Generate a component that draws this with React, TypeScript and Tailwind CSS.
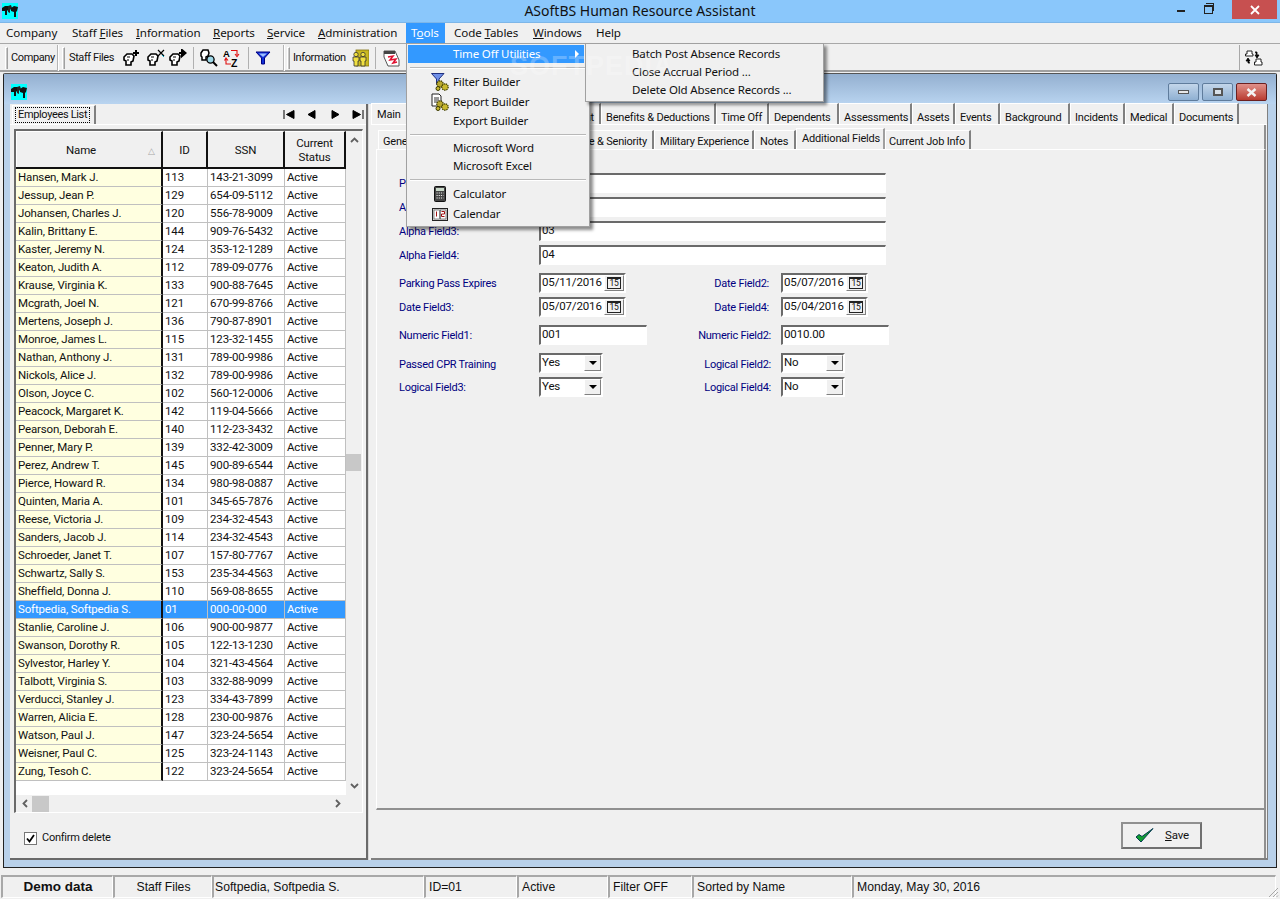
import React from "react";

const rows: [string, string, string][] = [
  ["Hansen, Mark J.", "113", "143-21-3099"],
  ["Jessup, Jean P.", "129", "654-09-5112"],
  ["Johansen, Charles J.", "120", "556-78-9009"],
  ["Kalin, Brittany E.", "144", "909-76-5432"],
  ["Kaster, Jeremy N.", "124", "353-12-1289"],
  ["Keaton, Judith A.", "112", "789-09-0776"],
  ["Krause, Virginia K.", "133", "900-88-7645"],
  ["Mcgrath, Joel N.", "121", "670-99-8766"],
  ["Mertens, Joseph J.", "136", "790-87-8901"],
  ["Monroe, James L.", "115", "123-32-1455"],
  ["Nathan, Anthony J.", "131", "789-00-9986"],
  ["Nickols, Alice J.", "132", "789-00-9986"],
  ["Olson, Joyce C.", "102", "560-12-0006"],
  ["Peacock, Margaret K.", "142", "119-04-5666"],
  ["Pearson, Deborah E.", "140", "112-23-3432"],
  ["Penner, Mary P.", "139", "332-42-3009"],
  ["Perez, Andrew T.", "145", "900-89-6544"],
  ["Pierce, Howard R.", "134", "980-98-0887"],
  ["Quinten, Maria A.", "101", "345-65-7876"],
  ["Reese, Victoria J.", "109", "234-32-4543"],
  ["Sanders, Jacob J.", "114", "234-32-4543"],
  ["Schroeder, Janet T.", "107", "157-80-7767"],
  ["Schwartz, Sally S.", "153", "235-34-4563"],
  ["Sheffield, Donna J.", "110", "569-08-8655"],
  ["Softpedia, Softpedia S.", "01", "000-00-000"],
  ["Stanlie, Caroline J.", "106", "900-00-9877"],
  ["Swanson, Dorothy R.", "105", "122-13-1230"],
  ["Sylvestor, Harley Y.", "104", "321-43-4564"],
  ["Talbott, Virginia S.", "103", "332-88-9099"],
  ["Verducci, Stanley J.", "123", "334-43-7899"],
  ["Warren, Alicia E.", "128", "230-00-9876"],
  ["Watson, Paul J.", "147", "323-24-5654"],
  ["Weisner, Paul C.", "125", "323-24-1143"],
  ["Zung, Tesoh C.", "122", "323-24-5654"],
];

const Logo = () => (
  <svg width="16" height="16" viewBox="0 0 16 16" className="block">
    <rect width="16" height="16" fill="#00ffff" />
    <path d="M0 5 L3 3 L7 3 L7 6 L5 8 L5 12 L3 12 L3 8 L0 8Z" fill="#111" />
    <path d="M6 3 L9 2 L10 5 L8 7 L8 10 L6 9Z" fill="#222" />
    <path d="M9 5 L12 3 L16 4 L15 8 L14 9 L14 14 L12 14 L12 9 L9 8Z" fill="#111" />
  </svg>
);

const Head = ({ mark }: { mark: "plus" | "x" | "arrow" }) => (
  <svg width="18" height="18" viewBox="0 0 18 18" className="block shrink-0">
    <path d="M1 8 L4 5 L9 5 L11 7 L10 12 L8 13 L8 16 L3 16 L3 12 L1 11Z" fill="#fff" stroke="#000" strokeWidth="1.6" />
    <path d="M4 8 L7 8 M4 11 L6 11" stroke="#000" strokeWidth="1.2" />
    {mark === "plus" && <path d="M13 1 V7 M10 4 H16" stroke="#000" strokeWidth="2" />}
    {mark === "x" && <path d="M11 1 L17 7 M17 1 L11 7" stroke="#000" strokeWidth="1.2" />}
    {mark === "x" && <path d="M15 6 L17 8" stroke="#00a0c0" strokeWidth="1" />}
    {mark === "arrow" && <path d="M10 4 H14 M13 1 L16.5 4 L13 7Z" stroke="#000" strokeWidth="2" fill="#000" />}
  </svg>
);

const SearchIcon = () => (
  <svg width="18" height="18" viewBox="0 0 18 18" className="block shrink-0">
    <path d="M1 4 L3 1 L8 1 L9 4 L8 7 L6 8 L6 11 L2 11 L2 8 L1 7Z" fill="#fff" stroke="#000" strokeWidth="1.5" />
    <circle cx="10.5" cy="10.5" r="3.6" fill="#9fd8e8" stroke="#000" strokeWidth="1.3" />
    <path d="M13 13 L17 17" stroke="#000" strokeWidth="2" />
  </svg>
);

const SortIcon = () => (
  <svg width="18" height="18" viewBox="0 0 18 18" className="block shrink-0">
    <text x="0" y="8" fontFamily="Liberation Sans, sans-serif" fontWeight="700" fontSize="9.5" fill="#000">A</text>
    <text x="8" y="18" fontFamily="Liberation Sans, sans-serif" fontWeight="700" fontSize="10.5" fill="#000">Z</text>
    <path d="M8 1.5 H14 V6 M12 5 L14 7.5 L16 5" fill="none" stroke="#e01010" strokeWidth="1.1" />
    <path d="M8 15 H3 V10 M1.5 11.5 L3 9 L5 11.5" fill="none" stroke="#e01010" strokeWidth="1.1" />
  </svg>
);

const FunnelIcon = () => (
  <svg width="16" height="14" viewBox="0 0 16 14" className="block shrink-0">
    <path d="M1 1 H15 L9.5 7 V13 H6.5 V7Z" fill="#1030d8" stroke="#000080" strokeWidth="1" />
    <path d="M4 2.5 H12 L8 6Z" fill="#9fc0ff" />
  </svg>
);

const PeopleIcon = () => (
  <svg width="18" height="18" viewBox="0 0 18 18" className="block shrink-0">
    <rect x="5" y="1" width="13" height="16" fill="#c8b820" stroke="#807010" strokeWidth="0.8" />
    <circle cx="5" cy="5.5" r="2.2" fill="#f0e040" stroke="#333" strokeWidth="0.8" />
    <path d="M2 8 H8 V12 H7 V17 H3 V12 H2Z" fill="#f0e040" stroke="#333" strokeWidth="0.8" />
    <circle cx="12" cy="5.5" r="2.2" fill="#f0e040" stroke="#333" strokeWidth="0.8" />
    <path d="M9 8 H15 V12 H14 V17 H10 V12 H9Z" fill="#f0e040" stroke="#333" strokeWidth="0.8" />
  </svg>
);

const PlannerIcon = () => (
  <svg width="17" height="17" viewBox="0 0 17 17" className="block shrink-0">
    <path d="M1 1 H12 L16 10 V16 H5 L1 7Z" fill="#fff" stroke="#555" strokeWidth="1" />
    <path d="M1 1 H12 V4 H1Z" fill="#444" />
    <path d="M5 7 L10 6 L7 10 L13 9 L10 13 L14 12" fill="none" stroke="#e01030" strokeWidth="1.5" />
  </svg>
);

const TransferIcon = () => (
  <svg width="18" height="18" viewBox="0 0 18 18" className="block">
    <path d="M2 2 H7 V5 H8 V7 H0.5 V5 H2Z" fill="#fff" stroke="#222" strokeWidth="1" />
    <path d="M11 10 H16 V13 H17 V16 H9.5 V13 H11Z" fill="#fff" stroke="#222" strokeWidth="1" />
    <path d="M10 3 H12 V7 M10 6 L12 9 L14 6Z" fill="#000" stroke="#000" strokeWidth="0.8" />
    <path d="M5 14 H3 V11 M1 12 L3 9 L5 12Z" fill="#000" stroke="#000" strokeWidth="0.8" />
  </svg>
);

const BuilderIcon = ({ kind }: { kind: "filter" | "report" }) => (
  <svg width="18" height="18" viewBox="0 0 18 18" className="block">
    {kind === "filter" ? (
      <path d="M0.5 0.5 H13 L8 6 V11 H5.5 V6Z" fill="#6f8fe8" stroke="#203080" strokeWidth="1" />
    ) : (
      <path d="M1 1 H8 L10 3 V13 H1Z" fill="#fff" stroke="#222" strokeWidth="1" />
    )}
    {kind === "report" && <path d="M3 5 H8 M3 7 H8 M3 9 H6" stroke="#333" strokeWidth="1" />}
    <circle cx="9" cy="11" r="3.2" fill="#b8a830" stroke="#3a3a00" strokeWidth="1.2" strokeDasharray="1.4 0.8" />
    <circle cx="14" cy="14" r="3.2" fill="#c8b830" stroke="#3a3a00" strokeWidth="1.2" strokeDasharray="1.4 0.8" />
    <circle cx="7" cy="15.5" r="2" fill="#c8b830" stroke="#3a3a00" strokeWidth="1" />
  </svg>
);

const CalcIcon = () => (
  <svg width="12" height="16" viewBox="0 0 12 16" className="block">
    <rect x="0.5" y="0.5" width="11" height="15" rx="1" fill="#444" stroke="#111" />
    <rect x="2" y="2" width="8" height="3" fill="#c8d8c8" />
    <path d="M2.5 7 H9.5 M2.5 9.5 H9.5 M2.5 12 H9.5" stroke="#e8e8e8" strokeWidth="1.2" strokeDasharray="1.2 1" />
  </svg>
);

const BookIcon = () => (
  <svg width="16" height="13" viewBox="0 0 16 13" className="block">
    <rect x="0.5" y="0.5" width="15" height="12" fill="#ddd" stroke="#222" />
    <rect x="2" y="2" width="5.5" height="9" fill="#fff" stroke="#444" strokeWidth="0.6" />
    <rect x="8.5" y="2" width="5.5" height="9" fill="#fff" stroke="#444" strokeWidth="0.6" />
    <path d="M4.5 3.5 V8.5 M9.5 3.5 H12.5 V6 H9.5 V8.5 H12.5" fill="none" stroke="#a01010" strokeWidth="1" />
  </svg>
);

const Grip = () => <div className="w-[3px] h-[22px] border-l border-t border-white bg-[#c8c8c8] shrink-0 border-r border-r-[#a0a0a0]" />;
const Divider = () => <div className="w-[2px] h-[26px] bg-[#b4b4b4] border-r border-white shrink-0" />;
const Sep = () => <div className="w-px h-[22px] bg-[#b0b0b0] shrink-0" />;

const menus: [React.ReactNode, string][] = [
  [<span>Company</span>, "w-[66px] pl-[6px]"],
  [<span>Staff <u>F</u>iles</span>, "w-[64px] pl-[6px]"],
  [<span><u>I</u>nformation</span>, "w-[77px] pl-[6px]"],
  [<span><u>R</u>eports</span>, "w-[54px] pl-[6px]"],
  [<span><u>S</u>ervice</span>, "w-[51px] pl-[6px]"],
  [<span><u>A</u>dministration</span>, "w-[94px] pl-[6px]"],
  [<span>T<u>o</u>ols</span>, "w-[39px] pl-[5px] bg-[#3399ff] text-white"],
  [<span>Code <u>T</u>ables</span>, "w-[82px] pl-[9px]"],
  [<span><u>W</u>indows</span>, "w-[63px] pl-[6px]"],
  [<span>Help</span>, "w-[50px] pl-[6px]"],
];

const Tab = ({ children, c, active, tall, right, main }: { children?: React.ReactNode; c: string; active?: boolean; tall?: boolean; right?: boolean; main?: boolean }) => (
  <div
    className={`${c} shrink-0 flex items-center whitespace-nowrap overflow-hidden border-t border-l border-white border-r-2 border-r-[#808080] bg-[#f0f0f0] ${
      right ? "justify-end pr-[5px]" : ""
    } ${
      active
        ? "h-[21px] -mt-[2px] border-r-[#a0a0a0]"
        : main
          ? "h-[21px] pt-[3px]"
          : tall
            ? "h-[21px] pt-[7px] leading-[13px]"
            : "h-[19px] pt-[3px] leading-[15px]"
    }`}
  >
    <span>{children}</span>
  </div>
);

const sunken = "border-t-2 border-l-2 border-t-[#6a6a6a] border-l-[#6a6a6a] border-r border-b border-r-white border-b-white";

const Input = ({ v, w }: { v: string; w: string }) => (
  <div className={`${w} h-[20px] bg-white ${sunken} pl-[1px] leading-[15px] shrink-0 whitespace-nowrap`}>{v}</div>
);

const DateBox = ({ v }: { v: string }) => (
  <div className={`w-[87px] h-[20px] bg-white ${sunken} border-r-2 border-b-2 border-r-[#6a6a6a] border-b-[#6a6a6a] flex shrink-0`}>
    <div className="flex-1 pl-[1px] leading-[15px]">{v}</div>
    <div className="w-[20px] h-full bg-[#f0f0f0] border-t border-l border-white border-r border-b border-r-[#808080] border-b-[#808080] flex items-center justify-center">
      <span className="border-t-2 border-b border-x border-[#222] text-[8.5px] leading-[8px] h-[12px] px-[1px] tracking-[-0.2px]">15</span>
    </div>
  </div>
);

const Select = ({ v }: { v: string }) => (
  <div className={`w-[64px] h-[20px] bg-white ${sunken} border-r-2 border-b-2 border-r-[#6a6a6a] border-b-[#6a6a6a] flex shrink-0`}>
    <div className="flex-1 pl-[1px] leading-[15px]">{v}</div>
    <div className="w-[17px] h-full bg-[#f0f0f0] border-t border-l border-white border-r border-b border-r-[#808080] border-b-[#808080] flex items-center justify-center">
      <span className="w-0 h-0 border-x-[4px] border-x-transparent border-t-[4px] border-t-black" />
    </div>
  </div>
);

const lab = "text-[#000080] text-[11px] tracking-[-0.25px] leading-[20px] whitespace-nowrap shrink-0";
const Label = ({ t, lower }: { t: string; lower?: boolean }) => <div className={`w-[140px] ${lab} ${lower ? "pt-[2px]" : "pt-[1px]"}`}>{t}</div>;

const Nav = ({ kind }: { kind: "first" | "prev" | "next" | "last" }) => (
  <svg width="12" height="9" viewBox="0 0 12 9" className="block">
    {kind === "first" && <path d="M1 0 V9 M2 0 H2 M11 0.5 L3.5 4.5 L11 8.5Z" stroke="#000" fill="#000" />}
    {kind === "prev" && <path d="M9 0.5 L2 4.5 L9 8.5Z" fill="#000" stroke="#000" />}
    {kind === "next" && <path d="M3 0.5 L10 4.5 L3 8.5Z" fill="#000" stroke="#000" />}
    {kind === "last" && <path d="M11 0 V9 M1 0.5 L8.5 4.5 L1 8.5Z" stroke="#000" fill="#000" />}
  </svg>
);

const Chevron = ({ d }: { d: string }) => (
  <svg width="9" height="9" viewBox="0 0 9 9" className="block">
    <path d={d} fill="none" stroke="#606060" strokeWidth="1.8" />
  </svg>
);

const MenuRow = ({ h, icon, t }: { h: string; icon?: React.ReactNode; t: string }) => (
  <div className={`${h} flex items-center`}>
    <div className="w-[45px] flex justify-center pr-[2px] pl-[21px]">{icon}</div>
    <div>{t}</div>
  </div>
);

const MenuSep = () => (
  <div className="h-[9px] flex items-center mx-[2px]">
    <div className="w-full h-[2px] bg-[#b8b8b8] border-b border-white" />
  </div>
);

const StatusCell = ({ w, children, center, bold, pl }: { w: string; children: React.ReactNode; center?: boolean; bold?: boolean; pl?: boolean }) => (
  <div
    className={`${w} shrink-0 h-[23px] border-t-2 border-l-2 border-t-[#a8a8a8] border-l-[#a8a8a8] border-b border-r border-white flex items-center whitespace-nowrap pt-[1px] ${pl ? "pl-[3px]" : "pl-[1px]"} ${
      center ? "justify-center" : ""
    } ${bold ? "font-bold text-[13.5px]" : ""}`}
  >
    {children}
  </div>
);

export default function App() {
  const ui = "font-['Roboto',sans-serif] text-[11.5px] tracking-[-0.15px] text-[#111]";
  const seg = "font-['Noto_Sans',sans-serif] text-[#111]";
  const tb = "text-[11px] tracking-[-0.4px]";
  const tabs = "text-[11px] tracking-[-0.2px]";
  return (
    <div className="relative w-[1280px] h-[899px] overflow-hidden bg-[#f0f0f0] flex flex-col">
      {/* Title bar */}
      <div className="h-[23px] shrink-0 bg-[#8ac7fb] relative flex items-center justify-center font-['Noto_Sans',sans-serif] text-[14px] text-[#111] border-b border-[#7db6e8]">
        <div className="absolute left-[2px] top-[3px]"><Logo /></div>
        <span className="-mt-[1px]">ASoftBS Human Resource Assistant</span>
        <div className="absolute right-[3px] top-0 flex h-[19px] items-center">
          <div className="w-[8px] h-[2px] bg-[#222] mr-[19px] mt-[3px]" />
          <div className="relative w-[9px] h-[9px] border border-[#222] border-t-2 mr-[19px] bg-[#8ac7fb]">
            <div className="absolute -top-[4px] left-[1px] w-[8px] h-[8px] border border-[#222] border-b-0 border-l-0" />
          </div>
          <div className="w-[45px] h-[19px] bg-[#c75050] text-white flex items-center justify-center">
            <svg width="10" height="10" viewBox="0 0 10 10"><path d="M1 1 L9 9 M9 1 L1 9" stroke="#fff" strokeWidth="1.8" /></svg>
          </div>
        </div>
      </div>

      {/* Menu bar */}
      <div className={`h-[21px] shrink-0 flex items-stretch border-b border-[#a8a8a8] text-[11.6px] ${seg}`}>
        {menus.map(([t, c], i) => (
          <div key={i} className={`${c} flex items-center whitespace-nowrap tracking-[-0.1px]`}>{t}</div>
        ))}
      </div>

      {/* Toolbar */}
      <div className={`h-[28px] shrink-0 flex items-center border-b-2 border-[#a0a0a0] pl-[5px] pt-[2px] ${ui}`}>
        <Grip />
        <div className={`w-[49px] pl-[3px] shrink-0 ${tb}`}>Company</div>
        <Divider />
        <div className="w-[3px]" />
        <Grip />
        <div className={`w-[58px] pl-[4px] shrink-0 whitespace-nowrap ${tb}`}>Staff Files</div>
        <Head mark="plus" />
        <div className="w-[6px]" />
        <Head mark="x" />
        <div className="w-[4px]" />
        <Head mark="arrow" />
        <div className="w-[6px]" />
        <Sep />
        <div className="w-[6px]" />
        <SearchIcon />
        <div className="w-[5px]" />
        <SortIcon />
        <div className="w-[7px]" />
        <Sep />
        <div className="w-[6px]" />
        <FunnelIcon />
        <div className="w-[12px]" />
        <Divider />
        <div className="w-[2px]" />
        <Grip />
        <div className={`w-[61px] pl-[3px] shrink-0 whitespace-nowrap ${tb}`}>Information</div>
        <PeopleIcon />
        <div className="w-[6px]" />
        <Sep />
        <div className="w-[7px]" />
        <PlannerIcon />
        <div className="flex-1" />
        <div className="w-px h-[26px] bg-[#a8a8a8] mr-[5px]" />
        <div className="mr-[17px]"><TransferIcon /></div>
      </div>

      {/* MDI area */}
      <div className={`flex-1 min-h-0 pl-[3px] pt-[1px] ${ui}`}>
        <div className="w-[1274px] h-[795px] border border-[#222] border-t-[#555] rounded-t-[2px] bg-[#b9d1ea] flex flex-col">
          {/* child title */}
          <div className="h-[30px] shrink-0 bg-gradient-to-b from-[#94b0d0] to-[#b9d4f0] flex items-end pb-[4px] pl-[7px] pr-[9px]">
            <Logo />
            <div className="flex-1" />
            <div className="flex gap-[3px] mb-[-1px]">
              <div className="w-[31px] h-[18px] rounded-[2px] border border-[#5f7c9c] bg-gradient-to-b from-[#c3d6ea] to-[#8fb0d2] flex items-center justify-center">
                <div className="w-[11px] h-[4px] bg-[#e8e8e8] border border-[#555]" />
              </div>
              <div className="w-[31px] h-[18px] rounded-[2px] border border-[#5f7c9c] bg-gradient-to-b from-[#c3d6ea] to-[#8fb0d2] flex items-center justify-center">
                <div className="w-[10px] h-[8px] bg-[#d8e0e8] border-2 border-[#555]" />
              </div>
              <div className="w-[31px] h-[18px] rounded-[2px] border border-[#6b2020] bg-gradient-to-b from-[#e0908a] to-[#b83a30] flex items-center justify-center">
                <svg width="11" height="9" viewBox="0 0 11 9"><path d="M1.5 1 L9.5 8 M9.5 1 L1.5 8" stroke="#f4f4f4" strokeWidth="2.4" /></svg>
              </div>
            </div>
          </div>

          {/* child body */}
          <div className="flex-1 min-h-0 flex pl-[6px] pb-[7px] pr-[8px]">
            {/* Left panel */}
            <div className="w-[358px] h-full bg-[#f0f0f0] border-r-2 border-b-2 border-r-[#6a6a6a] border-b-[#6a6a6a] flex flex-col shrink-0">
              <div className="h-[20px] flex items-end shrink-0 pl-[2px] relative">
                <div className="w-[84px] h-[19px] flex items-center border-t border-l border-white border-r-2 border-r-[#808080] pl-[2px]">
                  <span className="border border-dotted border-black px-[2px] leading-[14px] whitespace-nowrap text-[11px] tracking-[-0.35px]">Employees List</span>
                </div>
                <div className="flex-1" />
                <div className="flex items-center gap-[11px] pr-[2px] h-full">
                  <Nav kind="first" />
                  <Nav kind="prev" />
                  <Nav kind="next" />
                  <Nav kind="last" />
                </div>
              </div>
              {/* Tab sheet */}
              <div className="border-t border-white flex-1 min-h-0 pt-[4px] pl-[4px]">
                <div className="w-[349px] h-[684px] border-t-2 border-l-2 border-t-[#6a6a6a] border-l-[#6a6a6a] border-b border-r border-b-white border-r-white flex flex-col">
                  <div className="flex flex-1 min-h-0">
                    <div className="w-[330px] flex flex-col bg-white shrink-0">
                      {/* header */}
                      <div className="h-[38px] flex shrink-0 border-b-2 border-[#111] bg-[#f0f0f0] text-center leading-[14px]">
                        <div className="w-[147px] border-r-2 border-[#111] flex items-center justify-center relative shrink-0 border-t border-l border-t-white border-l-white pr-[16px]">
                          Name
                          <span className="absolute right-[6px] top-[12px] text-[#a8a8a8] text-[9px]">△</span>
                        </div>
                        <div className="w-[45px] border-r-2 border-[#111] flex items-center justify-center shrink-0 border-t border-t-white">ID</div>
                        <div className="w-[77px] border-r-2 border-[#111] flex items-center justify-center shrink-0 border-t border-t-white">SSN</div>
                        <div className="w-[61px] border-r-2 border-[#111] flex items-center justify-center shrink-0 border-t border-t-white">Current<br />Status</div>
                      </div>
                      {rows.map(([n, id, s]) => {
                        const sel = n.startsWith("Softpedia");
                        return (
                          <div key={n + id} className={`h-[18px] flex shrink-0 leading-[17px] whitespace-nowrap ${sel ? "bg-[#3399ff] text-white" : ""}`}>
                            <div className={`w-[147px] shrink-0 pl-[2px] border-r-2 border-r-[#111] border-b border-b-[#c0c0c0] ${sel ? "" : "bg-[#ffffe0]"}`}>{n}</div>
                            <div className="w-[45px] shrink-0 pl-[2px] border-r border-b border-[#c0c0c0]">{id}</div>
                            <div className="w-[77px] shrink-0 pl-[2px] border-r border-b border-[#c0c0c0]">{s}</div>
                            <div className="w-[61px] shrink-0 pl-[2px] border-r border-b border-[#c0c0c0]">Active</div>
                          </div>
                        );
                      })}
                    </div>
                    {/* vertical scrollbar */}
                    <div className="w-[16px] flex flex-col items-center justify-between py-[5px] relative">
                      <Chevron d="M1 6 L4.5 2.5 L8 6" />
                      <div className="absolute left-0 top-[323px] w-[15px] h-[17px] bg-[#c8c8c8]" />
                      <Chevron d="M1 3 L4.5 6.5 L8 3" />
                    </div>
                  </div>
                  {/* horizontal scrollbar */}
                  <div className="h-[17px] shrink-0 flex items-center pl-[5px] pr-[20px] relative">
                    <Chevron d="M6 1 L2.5 4.5 L6 8" />
                    <div className="w-[17px] h-[16px] bg-[#c8c8c8] ml-[2px]" />
                    <div className="flex-1" />
                    <Chevron d="M3 1 L6.5 4.5 L3 8" />
                  </div>
                </div>
                <div className="flex items-center mt-[17px] ml-[10px]">
                  <div className="w-[13px] h-[13px] bg-white border border-[#777] flex items-center justify-center">
                    <svg width="9" height="9" viewBox="0 0 9 9"><path d="M1 4.5 L3.5 7.5 L8 1" fill="none" stroke="#000" strokeWidth="1.8" /></svg>
                  </div>
                  <span className="ml-[5px] text-[11px] tracking-[-0.25px]">Confirm delete</span>
                </div>
              </div>
            </div>

            {/* Splitter */}
            <div className="w-[3px] shrink-0 bg-[#f0f0f0] border-l border-[#d8d8d8]" />

            {/* Right panel */}
            <div className="flex-1 min-w-0 h-full bg-[#f0f0f0] border-r border-b-2 border-r-[#808080] border-b-[#808080] flex flex-col">
              <div className={`h-[21px] flex items-end shrink-0 border-b border-white ${tabs}`}>
                <Tab c="w-[121px] pl-[5px]" main>Main</Tab>
                <Tab c="w-[109px]" tall right>Employment</Tab>
                <Tab c="w-[115px] pl-[4px]" tall>Benefits &amp; Deductions</Tab>
                <Tab c="w-[53px] pl-[4px]" tall>Time Off</Tab>
                <Tab c="w-[70px] pl-[4px]" tall>Dependents</Tab>
                <Tab c="w-[73px] pl-[4px]" tall>Assessments</Tab>
                <Tab c="w-[43px] pl-[4px]" tall>Assets</Tab>
                <Tab c="w-[45px] pl-[4px]" tall>Events</Tab>
                <Tab c="w-[70px] pl-[4px]" tall>Background</Tab>
                <Tab c="w-[55px] pl-[4px]" tall>Incidents</Tab>
                <Tab c="w-[49px] pl-[4px]" tall>Medical</Tab>
                <Tab c="w-[65px] pl-[4px]" tall>Documents</Tab>
              </div>
              <div className="flex-1 min-h-0 flex flex-col border-r-2 border-[#909090] mr-[1px]">
                <div className={`h-[24px] shrink-0 pl-[7px] flex items-end ${tabs}`}>
                  <Tab c="w-[172px] pl-[4px]">General</Tab>
                  <Tab c="w-[104px]" right>Service &amp; Seniority</Tab>
                  <Tab c="w-[100px] pl-[5px]">Military Experience</Tab>
                  <Tab c="w-[42px] pl-[5px]">Notes</Tab>
                  <Tab c="w-[89px] pl-[5px]" active>Additional Fields</Tab>
                  <Tab c="w-[86px] pl-[3px]">Current Job Info</Tab>
                </div>
                <div className="ml-[5px] w-[890px] h-[661px] border-t border-l border-white border-r-2 border-b-2 border-r-[#909090] border-b-[#909090] pt-[23px] pl-[22px] shrink-0">
                  <div className="flex h-[20px]"><Label t="Personal" /><Input v="01" w="w-[347px]" /></div>
                  <div className="flex h-[20px] mt-[4px]"><Label t="Alpha Field2:" /><Input v="02" w="w-[347px]" /></div>
                  <div className="flex h-[20px] mt-[4px]"><Label t="Alpha Field3:" /><Input v="03" w="w-[347px]" /></div>
                  <div className="flex h-[20px] mt-[4px]"><Label t="Alpha Field4:" /><Input v="04" w="w-[347px]" /></div>
                  <div className="flex h-[20px] mt-[8px]">
                    <Label t="Parking Pass Expires" /><DateBox v="05/11/2016" />
                    <div className={`w-[155px] text-right pr-[12px] pt-[1px] ${lab}`}>Date Field2:</div><DateBox v="05/07/2016" />
                  </div>
                  <div className="flex h-[20px] mt-[4px]">
                    <Label t="Date Field3:" /><DateBox v="05/07/2016" />
                    <div className={`w-[155px] text-right pr-[12px] pt-[1px] ${lab}`}>Date Field4:</div><DateBox v="05/04/2016" />
                  </div>
                  <div className="flex h-[20px] mt-[8px]">
                    <Label t="Numeric Field1:" /><Input v="001" w="w-[108px]" />
                    <div className={`w-[134px] text-right pr-[10px] pt-[1px] ${lab}`}>Numeric Field2:</div>
                    <Input v="0010.00" w="w-[108px]" />
                  </div>
                  <div className="flex h-[20px] mt-[8px]">
                    <Label t="Passed CPR Training" lower /><Select v="Yes" />
                    <div className={`w-[178px] text-right pr-[10px] pt-[2px] ${lab}`}>Logical Field2:</div>
                    <Select v="No" />
                  </div>
                  <div className="flex h-[20px] mt-[4px]">
                    <Label t="Logical Field3:" /><Select v="Yes" />
                    <div className={`w-[178px] text-right pr-[10px] pt-[1px] ${lab}`}>Logical Field4:</div>
                    <Select v="No" />
                  </div>
                </div>
                <div className="flex-1 flex items-center justify-end pr-[62px] pt-[3px]">
                  <div className="w-[81px] h-[27px] border-2 border-[#707070] border-t-[#909090] border-l-[#909090] bg-[#f0f0f0] flex items-center pl-[12px]">
                    <svg width="19" height="17" viewBox="0 0 19 17">
                      <path d="M1 10 L6 15 L18 1.5 L7 9.5 L4 7.5Z" fill="#10a030" stroke="#053a50" strokeWidth="1" />
                    </svg>
                    <span className="ml-[11px]"><u>S</u>ave</span>
                  </div>
                </div>
              </div>
            </div>
          </div>
        </div>
      </div>

      {/* Status bar */}
      <div className="h-[24px] shrink-0 flex items-start pl-[1px] font-['Liberation_Sans',sans-serif] text-[12.2px] text-[#111] relative">
        <StatusCell w="w-[112px]" center bold>Demo data</StatusCell>
        <StatusCell w="w-[99px]" center>Staff Files</StatusCell>
        <StatusCell w="w-[212px]">Softpedia, Softpedia S.</StatusCell>
        <StatusCell w="w-[93px]" pl>ID=01</StatusCell>
        <StatusCell w="w-[91px]" pl>Active</StatusCell>
        <StatusCell w="w-[84px]" pl>Filter OFF</StatusCell>
        <StatusCell w="w-[160px]" pl>Sorted by Name</StatusCell>
        <StatusCell w="w-[424px]" pl>Monday, May 30, 2016</StatusCell>
        <svg width="12" height="12" viewBox="0 0 12 12" className="absolute right-[1px] bottom-[1px]">
          <path d="M11 2 L2 11 M11 6 L6 11 M11 9.5 L9.5 11" stroke="#a8a8a8" strokeWidth="1" />
        </svg>
      </div>

      {/* Open Tools menu */}
      <div className={`absolute left-[406px] top-[43px] w-[184px] h-[184px] bg-[#f0f0f0] border border-[#a0a0a0] shadow-[3px_3px_3px_rgba(0,0,0,0.45)] pt-[1px] px-[1px] text-[11.5px] tracking-[-0.15px] ${seg}`}>
        <div className="h-[18px] bg-[#3399ff] text-white flex items-center relative mr-[4px]">
          <span className="pl-[45px]">Time Off Utilities</span>
          <span className="absolute right-[5px] top-[5px] w-0 h-0 border-y-[4px] border-y-transparent border-l-[4px] border-l-white" />
        </div>
        <MenuSep />
        <MenuRow h="h-[20px]" t="Filter Builder" icon={<BuilderIcon kind="filter" />} />
        <MenuRow h="h-[20px]" t="Report Builder" icon={<BuilderIcon kind="report" />} />
        <MenuRow h="h-[18px]" t="Export Builder" />
        <MenuSep />
        <MenuRow h="h-[18px]" t="Microsoft Word" />
        <MenuRow h="h-[18px]" t="Microsoft Excel" />
        <MenuSep />
        <MenuRow h="h-[20px]" t="Calculator" icon={<CalcIcon />} />
        <MenuRow h="h-[20px]" t="Calendar" icon={<BookIcon />} />
      </div>

      {/* Time Off submenu */}
      <div className={`absolute left-[585px] top-[43px] w-[239px] h-[59px] bg-[#f0f0f0] border border-[#a0a0a0] shadow-[3px_3px_3px_rgba(0,0,0,0.45)] pt-[1px] pl-[46px] text-[11.5px] tracking-[-0.15px] ${seg}`}>
        <div className="h-[18px] flex items-center">Batch Post Absence Records</div>
        <div className="h-[18px] flex items-center">Close Accrual Period ...</div>
        <div className="h-[18px] flex items-center">Delete Old Absence Records ...</div>
      </div>

      {/* Watermark */}
      <div className="absolute left-[510px] top-[46px] font-['Liberation_Sans',sans-serif] font-bold text-[27px] tracking-[1px] text-white/25 pointer-events-none">SOFTPEDIA</div>
    </div>
  );
}
